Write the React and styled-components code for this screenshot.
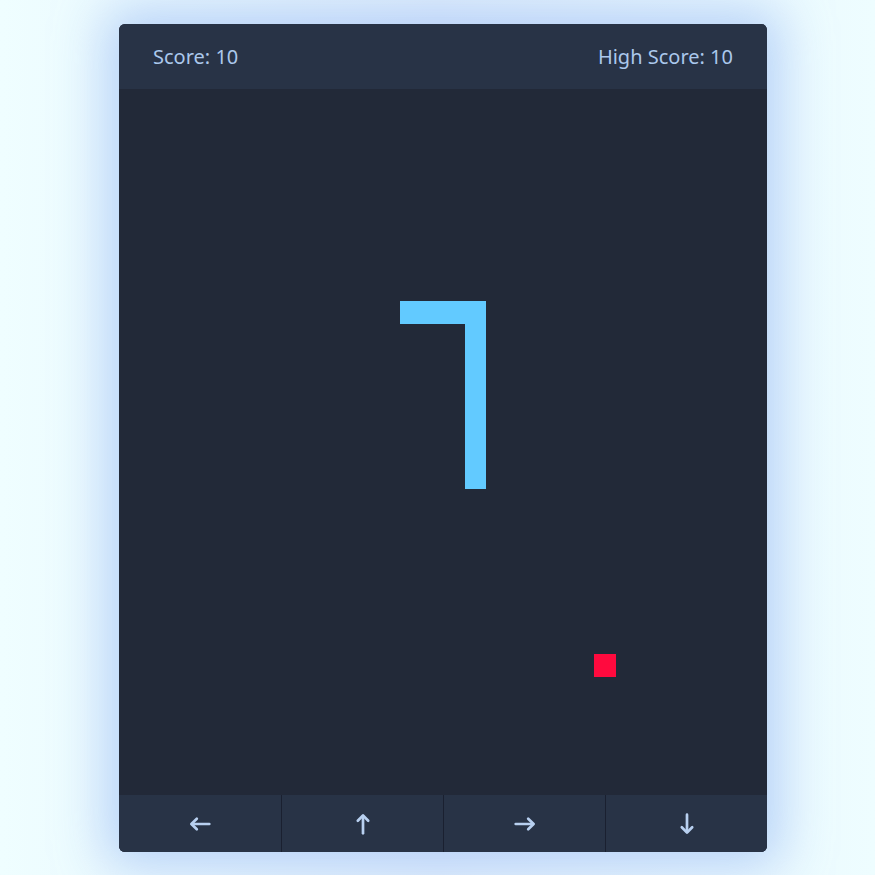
import React from 'react'
import styled, { createGlobalStyle } from 'styled-components'

const GlobalStyle = createGlobalStyle`
  html, body {
    margin: 0;
    padding: 0;
  }
  body {
    background: linear-gradient(90deg, #effeff 0%, #e3f0fc 50%, #eefdff 100%);
    font-family: "Noto Sans", "Open Sans", sans-serif;
    min-height: 875px;
  }
`;

const Page = styled.div`
  display: flex;
  justify-content: center;
  padding: 24px 0 0 11px;
`;

const Card = styled.div`
  width: 648px;
  height: 828px;
  border-radius: 6px;
  overflow: hidden;
  display: flex;
  flex-direction: column;
  background: #222938;
  box-shadow: 0 0 50px 14px rgba(150, 185, 245, 0.6);
`;

const Header = styled.div`
  height: 65px;
  flex: 0 0 65px;
  display: flex;
  align-items: center;
  justify-content: space-between;
  padding: 0 34px;
  background: #283346;
  color: #abc8ec;
  font-size: 20px;
`;

const Board = styled.div`
  flex: 1;
  display: grid;
  grid-template-columns: repeat(30, 1fr);
  grid-template-rows: repeat(30, 1fr);
  background: #222938;
`;

const Cell = styled.div`
  grid-column: ${p => p.$x + 1};
  grid-row: ${p => p.$y + 1};
  background: ${p => (p.$food ? '#ff0a3e' : '#62caff')};
`;

const Controls = styled.div`
  height: 57px;
  flex: 0 0 57px;
  display: grid;
  grid-template-columns: repeat(4, 1fr);
  background: #283346;
`;

const Button = styled.button`
  display: flex;
  align-items: center;
  justify-content: center;
  border: none;
  border-left: 1px solid #1a2030;
  background: #283346;
  color: #b8d0f0;
  padding: 0;
  cursor: pointer;
  &:first-child {
    border-left: none;
  }
`;

const ArrowSvg = styled.svg`
  width: 22px;
  height: 22px;
  transform: rotate(${p => p.$deg}deg);
`;

function Arrow({ deg }) {
  // drawn pointing left, rotated for the other directions
  return (
    <ArrowSvg $deg={deg} viewBox="0 0 22 22" fill="none" stroke="currentColor"
      strokeWidth="2.7" strokeLinecap="round" strokeLinejoin="round">
      <path d="M20.3 11H3" />
      <path d="M7.8 5.8L2.4 11L7.8 16.2" />
    </ArrowSvg>
  );
}

const snake = [
  [13, 9], [14, 9], [15, 9], [16, 9],
  [16, 10], [16, 11], [16, 12], [16, 13], [16, 14], [16, 15], [16, 16]
];
const food = [22, 24];

function App() {
  return (
    <>
      <GlobalStyle />
      <Page>
        <Card>
          <Header>
            <span>Score: 10</span>
            <span>High Score: 10</span>
          </Header>
          <Board>
            {snake.map(([x, y], i) => (
              <Cell key={i} $x={x} $y={y} />
            ))}
            <Cell $x={food[0]} $y={food[1]} $food />
          </Board>
          <Controls>
            <Button aria-label="left"><Arrow deg={0} /></Button>
            <Button aria-label="up"><Arrow deg={90} /></Button>
            <Button aria-label="right"><Arrow deg={180} /></Button>
            <Button aria-label="down"><Arrow deg={270} /></Button>
          </Controls>
        </Card>
      </Page>
    </>
  )
}

export default App;
